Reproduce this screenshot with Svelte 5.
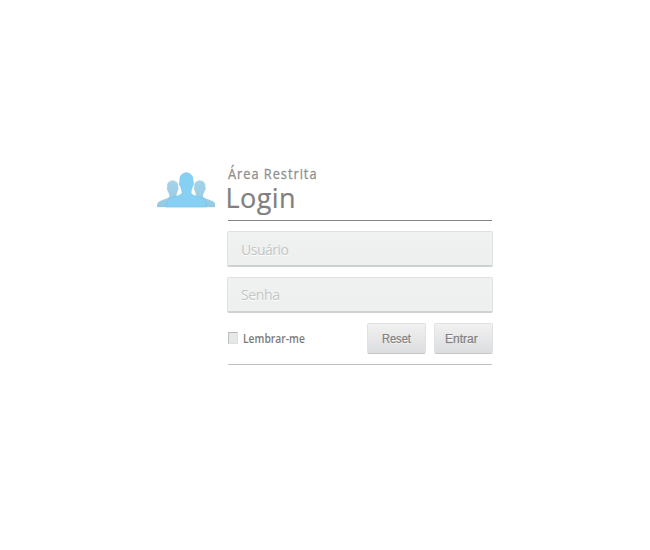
<script>
  let user = $state('');
  let password = $state('');
  let remember = $state(false);
</script>

<main>
  <svg class="people" width="58" height="36" viewBox="0 0 58 36" aria-hidden="true">
    <defs>
      <linearGradient id="back" x1="0" y1="0" x2="0" y2="1">
        <stop offset="0" stop-color="#a6d3e8" />
        <stop offset="1" stop-color="#93cae4" />
      </linearGradient>
      <path id="person" d="M10.400 15C9 6.500 22.400 6.500 21 15C21.700 16 21.200 18.200 20.500 18.700C20.200 20.500 19.200 22 19.200 24C20 26 23 27 26 28C29 29 30 31.500 30 35H0C0 32.500 .5 30.500 3 29.300C7 27.300 12.700 26.400 12.700 24C12.700 22 11.300 20.500 10.900 18.700C10 18.200 9.800 16 10.400 15Z" />
    </defs>
    <use href="#person" fill="url(#back)" stroke="#8fc3dc" stroke-width=".3" />
    <use href="#person" fill="url(#back)" stroke="#8fc3dc" stroke-width=".3" transform="translate(58.5 0) scale(-1 1)" />
    <path d="M22.900 9C21.300 -2 37.300 -2 35.900 9C36.900 10 36.500 13.500 35.500 14.200C35 16.800 34 18 34 20.500C34.300 23.300 38.500 23.900 43 25.100C48 26.400 49.500 28.500 49.700 35H9.300C9.500 28.500 11 26.400 16 25.100C20.500 23.900 24.700 23.300 25 20.500C25 18 23.900 16.800 23.400 14.200C22.300 13.500 22 10 22.900 9Z" fill="#86d0f4" stroke="#74bce0" stroke-width=".5" />
  </svg>
  <form onsubmit={(e) => e.preventDefault()}>
    <header>
      <p><span>Área Restrita</span></p>
      <h1>Login</h1>
    </header>
    <input class="field" type="text" placeholder="Usuário" aria-label="Usuário" bind:value={user} />
    <input class="field password" type="password" placeholder="Senha" aria-label="Senha" bind:value={password} />
    <div class="actions">
      <label>
        <input type="checkbox" bind:checked={remember} />
        <span>Lembrar-me</span>
      </label>
      <div class="buttons">
        <button type="reset"><span class="reset">Reset</span></button>
        <button type="submit"><span class="enter">Entrar</span></button>
      </div>
    </div>
  </form>
</main>

<style>
  :global(body) {
    background: #fff;
  }
  main {
    box-sizing: border-box;
    width: 650px;
    height: 550px;
    padding: 164px 0 0 157px;
    display: flex;
    align-items: flex-start;
    font-family: 'Open Sans', 'Noto Sans', sans-serif;
    color: #808080;
  }
  .people {
    margin-top: 8px;
    flex: none;
  }
  form {
    width: 266px;
    margin-left: 12px;
  }
  header {
    height: 56px;
    margin: 0 1px;
    border-bottom: 1px solid #858585;
  }
  p {
    margin: 0;
    height: 20px;
    font-size: 14px;
    line-height: 20px;
    letter-spacing: 1.1px;
    color: #8f8f8f;
    -webkit-text-stroke: 0.3px #8f8f8f;
  }
  span {
    display: inline-block;
    transform-origin: left center;
    white-space: nowrap;
  }
  p span {
    transform: scaleX(0.91);
  }
  h1 {
    margin: 0 0 0 -2.5px;
    font-size: 27px;
    line-height: 28px;
    font-weight: 400;
    letter-spacing: 0.4px;
    -webkit-text-stroke: 0.2px #808080;
  }
  .field {
    display: block;
    box-sizing: border-box;
    width: 266px;
    height: 36px;
    margin: 10px 0 0;
    padding: 2px 13px 0;
    border: 1px solid #dfe2e1;
    border-bottom: 2px solid #cdd1d0;
    border-radius: 2px;
    outline: none;
    background: linear-gradient(#f0f1f1, #edf0ef);
    font: 14px 'Open Sans', 'Noto Sans', sans-serif;
    letter-spacing: -0.5px;
    color: #777;
    text-shadow: 0 1px #fff;
  }
  .field::placeholder {
    color: #c3c5c5;
    opacity: 1;
  }
  .password {
    padding-top: 0;
    letter-spacing: -0.35px;
  }
  .actions {
    height: 41px;
    margin: 10px 1px 0;
    border-bottom: 1px solid #c1c1c1;
    display: flex;
    justify-content: space-between;
  }
  label {
    display: flex;
    align-items: center;
    height: 31px;
    font-size: 12px;
    font-weight: 600;
    color: #7b7b7b;
  }
  label span {
    transform: scaleX(0.86);
  }
  label input {
    appearance: none;
    box-sizing: border-box;
    width: 10px;
    height: 12px;
    margin: -1px 5px 0 0;
    border: 1px solid #dedfdf;
    border-top-color: #b9b9b9;
    border-left-color: #bebebe;
    background: #e6e8e8;
  }
  label input:checked {
    background: #8b8b8b;
  }
  .buttons {
    display: flex;
    gap: 8px;
    margin-right: -1px;
  }
  button {
    box-sizing: border-box;
    width: 59px;
    height: 31px;
    padding: 0 0 0 14px;
    border: 1px solid #e0e2e3;
    border-bottom: 1px solid #c5c7c8;
    border-radius: 2px;
    background: linear-gradient(#f1f1f1, #dcdddf);
    font: 12px 'Liberation Sans', Arial, sans-serif;
    text-align: left;
    color: #808080;
    -webkit-text-stroke: 0.25px #808080;
    text-shadow: 0 1px #fff;
  }
  .reset {
    transform: scaleX(0.92);
  }
  .enter {
    margin-left: -4px;
  }
</style>
